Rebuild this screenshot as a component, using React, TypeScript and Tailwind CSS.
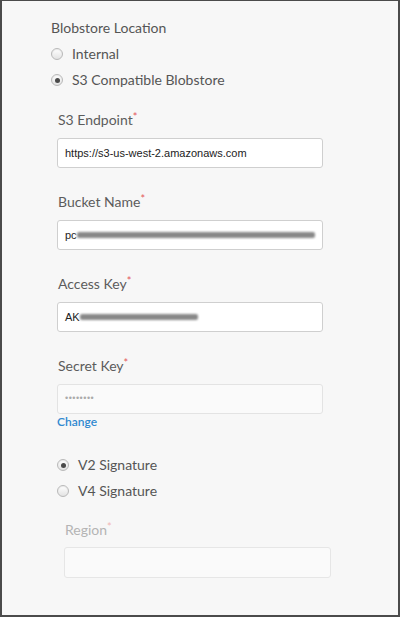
import type { ReactNode } from 'react';

const labelFont = { fontFamily: 'Lato, "Open Sans", sans-serif' };

function Radio({ checked, label }: { checked?: boolean; label: string }) {
  return (
    <div className="flex h-[26px] items-center gap-[9px]">
      <span className="flex h-[12px] w-[12px] items-center justify-center rounded-full border border-[#b9b9b9] bg-gradient-to-b from-[#ffffff] to-[#e3e3e3] shadow-[inset_0_1px_1px_rgba(0,0,0,0.08)]">
        {checked && <span className="h-[5px] w-[5px] rounded-full bg-[#4a4a4a]" />}
      </span>
      <span className="text-[14px] leading-[20px] text-[#555]">{label}</span>
    </div>
  );
}

function Label({ text, muted }: { text: string; muted?: boolean }) {
  return (
    <div
      className={`h-[20px] pl-[1px] text-[14px] leading-[20px] ${muted ? 'text-[#b4b4b4]' : 'text-[#5c5c5c]'}`}
    >
      {text}
      <span className={`relative -top-[4px] text-[11px] ${muted ? 'text-[#f2b6b6]' : 'text-[#e4595b]'}`}>*</span>
    </div>
  );
}

function Field({ children, disabled }: { children?: ReactNode; disabled?: boolean }) {
  return (
    <div
      className={`mt-[8px] flex h-[30px] w-[266px] items-center overflow-hidden rounded-[3px] border px-[7px] ${
        disabled ? 'border-[#e3e3e3] bg-[#fafafa]' : 'border-[#cfcfcf] bg-white'
      }`}
      style={{ fontFamily: '"Liberation Sans", Arial, sans-serif' }}
    >
      {children}
    </div>
  );
}

function Redacted({ width }: { width: number }) {
  return (
    <span className="relative inline-block h-[12px]" style={{ width }}>
      <span className="absolute inset-x-0 top-[3px] h-[6px] rounded-[2px] bg-[#888] blur-[1px]" />
    </span>
  );
}

export default function App() {
  return (
    <div
      className="h-[617px] w-[400px] border-x-2 border-b-2 border-t border-[#4b4b4b] bg-[#f7f7f7] pl-[49px] pt-[17px]"
      style={labelFont}
    >
      <div className="h-[20px] text-[14px] leading-[20px] text-[#555]">Blobstore Location</div>
      <div className="mt-[3px]">
        <Radio label="Internal" />
        <Radio checked label="S3 Compatible Blobstore" />
      </div>

      <div className="ml-[6px] mt-[17px]">
        <Label text="S3 Endpoint" />
        <Field>
          <span className="text-[11px] text-[#222]">https://s3-us-west-2.amazonaws.com</span>
        </Field>

        <div className="mt-[24px]">
          <Label text="Bucket Name" />
          <Field>
            <span className="whitespace-nowrap text-[11px] text-[#222]">pc</span>
            <Redacted width={250} />
          </Field>
        </div>

        <div className="mt-[24px]">
          <Label text="Access Key" />
          <Field>
            <span className="text-[11px] text-[#222]">AK</span>
            <Redacted width={118} />
          </Field>
        </div>

        <div className="mt-[24px]">
          <Label text="Secret Key" />
          <Field disabled>
            <span className="text-[9px] tracking-[0.5px] text-[#aaa]">••••••••</span>
          </Field>
          <div className="h-[16px] text-[12px] font-semibold leading-[16px] text-[#3089d0]">Change</div>
        </div>

        <div className="mt-[22px]">
          <Radio checked label="V2 Signature" />
          <Radio label="V4 Signature" />
        </div>

        <div className="ml-[7px] mt-[16px]">
          <Label text="Region" muted />
          <div className="mt-[7px] h-[31px] w-[267px] rounded-[3px] border border-[#e6e6e6] bg-[#fafafa]" />
        </div>
      </div>
    </div>
  );
}
